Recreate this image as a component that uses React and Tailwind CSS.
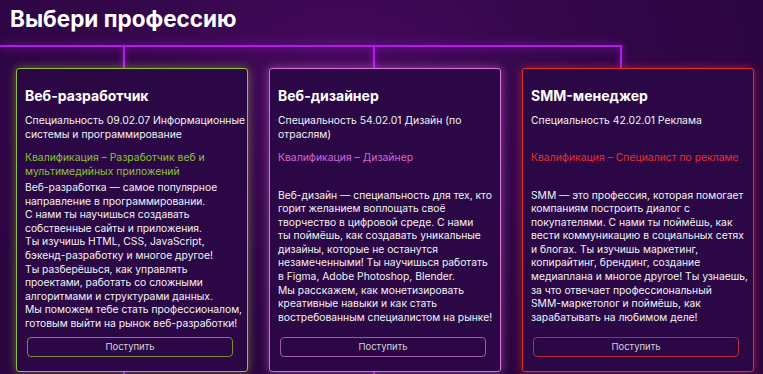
import React from "react";

const cards = [
  {
    title: "Веб-разработчик",
    spec: ["Специальность 09.02.07 Информационные", "системы и программирование"],
    qual: ["Квалификация – Разработчик веб и", "мультимедийных приложений"],
    border: "border-[#8fc031] shadow-[0_0_10px_rgba(143,192,49,0.55)]",
    qualColor: "text-[#8fc031]",
    btn: "border-[#7d8f3a]",
    descMt: "mt-[3px]",
    desc: [
      "Веб-разработка — самое популярное",
      "направление в программировании.",
      "С нами ты научишься создавать",
      "собственные сайты и приложения.",
      "Ты изучишь HTML, CSS, JavaScript,",
      "бэкенд-разработку и многое другое!",
      "Ты разберёшься, как управлять",
      "проектами, работать со сложными",
      "алгоритмами и структурами данных.",
      "Мы поможем тебе стать профессионалом,",
      "готовым выйти на рынок веб-разработки!",
    ],
  },
  {
    title: "Веб-дизайнер",
    spec: ["Специальность 54.02.01 Дизайн (по", "отраслям)"],
    qual: ["Квалификация – Дизайнер"],
    border: "border-[#d56fd5] shadow-[0_0_10px_rgba(213,111,213,0.6)]",
    qualColor: "text-[#d465d4]",
    btn: "border-[#a05aa6]",
    descMt: "mt-[24px]",
    desc: [
      "Веб-дизайн — специальность для тех, кто",
      "горит желанием воплощать своё",
      "творчество в цифровой среде. С нами",
      "ты поймёшь, как создавать уникальные",
      "дизайны, которые не останутся",
      "незамеченными! Ты научишься работать",
      "в Figma, Adobe Photoshop, Blender.",
      "Мы расскажем, как монетизировать",
      "креативные навыки и как стать",
      "востребованным специалистом на рынке!",
    ],
  },
  {
    title: "SMM-менеджер",
    spec: ["Специальность 42.02.01 Реклама"],
    qual: ["Квалификация – Специалист по рекламе"],
    border: "border-[#e0302e] shadow-[0_0_10px_rgba(224,48,46,0.6)]",
    qualColor: "text-[#e2302f]",
    btn: "border-[#b52a3a]",
    descMt: "mt-[24px]",
    desc: [
      "SMM — это профессия, которая помогает",
      "компаниям построить диалог с",
      "покупателями. С нами ты поймёшь, как",
      "вести коммуникацию в социальных сетях",
      "и блогах. Ты изучишь маркетинг,",
      "копирайтинг, брендинг, создание",
      "медиаплана и многое другое! Ты узнаешь,",
      "за что отвечает профессиональный",
      "SMM-маркетолог и поймёшь, как",
      "зарабатывать на любимом деле!",
    ],
  },
];

function Lines({ lines }) {
  return lines.map((line, i) => (
    <React.Fragment key={i}>
      {line}
      {i < lines.length - 1 && <br />}
    </React.Fragment>
  ));
}

function Card({ card }) {
  return (
    <div
      className={`relative z-10 flex h-[304px] w-[232px] flex-col rounded-[3px] border bg-[#2b0746] pt-[18px] pr-[4px] pb-[14px] pl-[8px] whitespace-nowrap ${card.border}`}
    >
      <h2 className="text-[14px] leading-[18px] font-bold text-white">{card.title}</h2>
      <p className="mt-[9px] min-h-[27px] text-[10.4px] leading-[13.5px] text-[#f2f2f2]">
        <Lines lines={card.spec} />
      </p>
      <p className={`mt-[10px] text-[10.4px] leading-[13.5px] ${card.qualColor}`}>
        <Lines lines={card.qual} />
      </p>
      <p className={`${card.descMt} text-[10.3px] leading-[13.6px] text-[#f2f2f2]`}>
        <Lines lines={card.desc} />
      </p>
      <button
        className={`mt-auto ml-[2px] h-[20px] w-[206px] rounded-[4px] border text-[9.5px] text-[#d4d4d8] ${card.btn}`}
      >
        Поступить
      </button>
    </div>
  );
}

export default function App() {
  return (
    <div
      className="relative h-[374px] w-[763px] overflow-hidden bg-[#2c0640] bg-[radial-gradient(ellipse_at_45%_20%,#48095f_0%,#35074b_35%,#2a0540_75%)]"
      style={{ fontFamily: "Inter, 'Noto Sans', sans-serif" }}
    >
      <h1 className="px-[10px] pt-[4px] text-[22.5px] leading-[30px] font-bold text-white">
        Выбери профессию
      </h1>

      {/* connector lines */}
      <div className="absolute top-[45px] left-0 h-[2px] w-[622px] bg-[#b01ee6] shadow-[0_0_8px_rgba(176,30,230,0.9)]" />
      <div className="absolute top-[46px] left-[123px] h-[328px] w-[2px] bg-[#b01ee6] shadow-[0_0_6px_rgba(176,30,230,0.9)]" />
      <div className="absolute top-[46px] left-[373px] h-[328px] w-[2px] bg-[#b01ee6] shadow-[0_0_6px_rgba(176,30,230,0.9)]" />
      <div className="absolute top-[45px] left-[620px] h-[24px] w-[2px] bg-[#b01ee6] shadow-[0_0_6px_rgba(176,30,230,0.9)]" />

      <div className="mt-[34px] flex gap-x-[21px] pl-[16px]">
        {cards.map((c) => (
          <Card key={c.title} card={c} />
        ))}
      </div>
    </div>
  );
}
